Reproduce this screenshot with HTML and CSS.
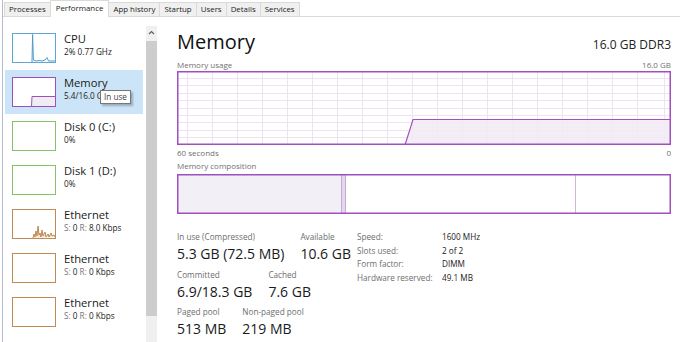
FILE: index.html
```html
<!DOCTYPE html>
<html lang="en">
  <head>
    <meta charset="UTF-8" />
    <title>Task Manager - Performance</title>
    <link rel="stylesheet" href="styles.css">
  </head>
  <body>
    <div class="app">
      <nav class="tabs">
        <span class="tab">Processes</span>
        <span class="tab active">Performance</span>
        <span class="tab">App history</span>
        <span class="tab">Startup</span>
        <span class="tab">Users</span>
        <span class="tab">Details</span>
        <span class="tab">Services</span>
      </nav>

      <div class="panes">
        <aside class="sidebar">
          <ul class="list">
            <li class="item">
              <svg class="thumb" width="44" height="30" viewBox="0 0 44 30">
                <rect x="0.5" y="0.5" width="43" height="29" fill="#fff" stroke="#5ea6d3" />
                <polyline points="20,29 20.6,1.5 21.4,27 24,28 27,27.5 30,28 33,27 35,24.5 36.5,28 43,28" fill="none" stroke="#4c9bcc" stroke-width="1" />
              </svg>
              <div class="info">
                <div class="name">CPU</div>
                <div class="sub">2% 0.77 GHz</div>
              </div>
            </li>
            <li class="item selected">
              <svg class="thumb" width="44" height="30" viewBox="0 0 44 30">
                <rect x="0.5" y="0.5" width="43" height="29" fill="#fff" stroke="#9d4fbf" />
                <polygon points="19.5,29.5 20,19.5 43.5,19.5 43.5,29.5" fill="#f0edf2" stroke="#9d4fbf" stroke-width="1" />
              </svg>
              <div class="info">
                <div class="name">Memory</div>
                <div class="sub clip">5.4/16.0 GB (34%)</div>
              </div>
              <div class="tooltip">In use</div>
            </li>
            <li class="item">
              <svg class="thumb" width="44" height="30" viewBox="0 0 44 30">
                <rect x="0.5" y="0.5" width="43" height="29" fill="#fff" stroke="#86c267" />
              </svg>
              <div class="info">
                <div class="name">Disk 0 (C:)</div>
                <div class="sub">0%</div>
              </div>
            </li>
            <li class="item">
              <svg class="thumb" width="44" height="30" viewBox="0 0 44 30">
                <rect x="0.5" y="0.5" width="43" height="29" fill="#fff" stroke="#86c267" />
              </svg>
              <div class="info">
                <div class="name">Disk 1 (D:)</div>
                <div class="sub">0%</div>
              </div>
            </li>
            <li class="item">
              <svg class="thumb" width="44" height="30" viewBox="0 0 44 30">
                <rect x="0.5" y="0.5" width="43" height="29" fill="#fff" stroke="#c08a52" />
                <polyline points="21,29 22,25 23,28 24,22 25,27 26,17 27,26 28,24 29,28 30,21 31,27 33,23 34,28 36,25 37,28 39,24 40,27 42,26 43,28" fill="#f3e7da" stroke="#c08a52" stroke-width="1" />
              </svg>
              <div class="info">
                <div class="name">Ethernet</div>
                <div class="sub"><span class="dim">S:</span> 0 <span class="dim">R:</span> 8.0 Kbps</div>
              </div>
            </li>
            <li class="item">
              <svg class="thumb" width="44" height="30" viewBox="0 0 44 30">
                <rect x="0.5" y="0.5" width="43" height="29" fill="#fff" stroke="#c08a52" />
              </svg>
              <div class="info">
                <div class="name">Ethernet</div>
                <div class="sub"><span class="dim">S:</span> 0 <span class="dim">R:</span> 0 Kbps</div>
              </div>
            </li>
            <li class="item">
              <svg class="thumb" width="44" height="30" viewBox="0 0 44 30">
                <rect x="0.5" y="0.5" width="43" height="29" fill="#fff" stroke="#c08a52" />
              </svg>
              <div class="info">
                <div class="name">Ethernet</div>
                <div class="sub"><span class="dim">S:</span> 0 <span class="dim">R:</span> 0 Kbps</div>
              </div>
            </li>
          </ul>
          <div class="scrollbar">
            <svg class="arrow" width="11" height="10" viewBox="0 0 11 10">
              <polyline points="3,6 5.5,3.5 8,6" fill="none" stroke="#606060" stroke-width="1.2" />
            </svg>
            <div class="scroll-thumb"></div>
          </div>
        </aside>

        <main class="detail">
          <header class="head">
            <h1 class="title">Memory</h1>
            <span class="spec">16.0 GB DDR3</span>
          </header>

          <div class="caption">
            <span>Memory usage</span>
            <span>16.0 GB</span>
          </div>
          <svg class="graph" width="494" height="74" viewBox="0 0 494 74">
            <g stroke="#efe3f3" stroke-width="1">
              <line x1="10.5" y1="0" x2="10.5" y2="74" />
              <line x1="35.5" y1="0" x2="35.5" y2="74" />
              <line x1="60.5" y1="0" x2="60.5" y2="74" />
              <line x1="85.5" y1="0" x2="85.5" y2="74" />
              <line x1="110.5" y1="0" x2="110.5" y2="74" />
              <line x1="135.5" y1="0" x2="135.5" y2="74" />
              <line x1="160.5" y1="0" x2="160.5" y2="74" />
              <line x1="185.5" y1="0" x2="185.5" y2="74" />
              <line x1="210.5" y1="0" x2="210.5" y2="74" />
              <line x1="235.5" y1="0" x2="235.5" y2="74" />
              <line x1="260.5" y1="0" x2="260.5" y2="74" />
              <line x1="285.5" y1="0" x2="285.5" y2="74" />
              <line x1="310.5" y1="0" x2="310.5" y2="74" />
              <line x1="335.5" y1="0" x2="335.5" y2="74" />
              <line x1="360.5" y1="0" x2="360.5" y2="74" />
              <line x1="385.5" y1="0" x2="385.5" y2="74" />
              <line x1="410.5" y1="0" x2="410.5" y2="74" />
              <line x1="435.5" y1="0" x2="435.5" y2="74" />
              <line x1="460.5" y1="0" x2="460.5" y2="74" />
              <line x1="487.5" y1="0" x2="487.5" y2="74" />
              <line x1="0" y1="7.5" x2="494" y2="7.5" />
              <line x1="0" y1="14.5" x2="494" y2="14.5" />
              <line x1="0" y1="22.5" x2="494" y2="22.5" />
              <line x1="0" y1="29.5" x2="494" y2="29.5" />
              <line x1="0" y1="37.5" x2="494" y2="37.5" />
              <line x1="0" y1="44.5" x2="494" y2="44.5" />
              <line x1="0" y1="51.5" x2="494" y2="51.5" />
              <line x1="0" y1="59.5" x2="494" y2="59.5" />
              <line x1="0" y1="66.5" x2="494" y2="66.5" />
            </g>
            <polygon points="228,74 236,48.5 494,48.5 494,74" fill="#f1ebf4" fill-opacity="0.85" stroke="#a054c0" stroke-width="1.2" />
            <rect x="0.75" y="0.75" width="492.5" height="72.5" fill="none" stroke="#a04fbf" stroke-width="1.5" />
          </svg>
          <div class="caption seconds">
            <span>60 seconds</span>
            <span>0</span>
          </div>

          <div class="caption composition-label">Memory composition</div>
          <svg class="composition" width="494" height="40" viewBox="0 0 494 40">
            <rect x="0" y="0" width="164.5" height="40" fill="#f3eff6" />
            <rect x="164.5" y="0" width="4" height="40" fill="#e6d8ec" />
            <line x1="164.5" y1="0" x2="164.5" y2="40" stroke="#c9a7d8" stroke-width="1" />
            <line x1="168.5" y1="0" x2="168.5" y2="40" stroke="#c9a7d8" stroke-width="1" />
            <line x1="398.5" y1="0" x2="398.5" y2="40" stroke="#d2b4de" stroke-width="1" />
            <rect x="0.75" y="0.75" width="492.5" height="38.5" fill="none" stroke="#a04fbf" stroke-width="1.5" />
          </svg>

          <section class="stats">
            <div class="figures">
              <div class="row">
                <div class="cell"><div class="label">In use (Compressed)</div><div class="value">5.3 GB (72.5 MB)</div></div>
                <div class="cell"><div class="label">Available</div><div class="value">10.6 GB</div></div>
              </div>
              <div class="row">
                <div class="cell"><div class="label">Committed</div><div class="value">6.9/18.3 GB</div></div>
                <div class="cell"><div class="label">Cached</div><div class="value">7.6 GB</div></div>
              </div>
              <div class="row">
                <div class="cell"><div class="label">Paged pool</div><div class="value">513 MB</div></div>
                <div class="cell"><div class="label">Non-paged pool</div><div class="value">219 MB</div></div>
              </div>
            </div>
            <dl class="specs">
              <dt>Speed:</dt><dd>1600 MHz</dd>
              <dt>Slots used:</dt><dd>2 of 2</dd>
              <dt>Form factor:</dt><dd>DIMM</dd>
              <dt>Hardware reserved:</dt><dd>49.1 MB</dd>
            </dl>
          </section>
        </main>
      </div>
    </div>
  </body>
</html>
```

FILE: styles.css
```css
* {
  box-sizing: border-box;
}
body {
  margin: 0;
  background: #fff;
  font-family: "Open Sans", "Noto Sans", sans-serif;
  color: #1a1a1a;
}
.app {
  width: 678px;
  height: 342px;
  overflow: hidden;
  border-left: 1px solid #b4bccb;
  margin-left: 2px;
  display: flex;
  flex-direction: column;
}

/* tabs */
.tabs {
  display: flex;
  align-items: flex-end;
  height: 17px;
  padding-left: 1px;
  border-bottom: 1px solid #d9d9d9;
}
.tab {
  height: 14px;
  padding: 0 4px;
  font-size: 7.9px;
  line-height: 13px;
  color: #222;
  background: #f0f0f0;
  border: 1px solid #dadada;
  border-bottom: none;
  margin-right: -1px;
}
.tab.active {
  height: 17px;
  line-height: 15px;
  padding: 0 5px;
  background: #fff;
  margin-bottom: -1px;
  position: relative;
  z-index: 1;
}

/* sidebar */
.panes {
  flex: 1;
  display: flex;
  min-height: 0;
}
.sidebar {
  width: 155px;
  display: flex;
  padding-top: 9px;
}
.list {
  list-style: none;
  margin: 0;
  padding: 0 0 0 2px;
  width: 140px;
}
.item {
  position: relative;
  display: flex;
  align-items: flex-start;
  height: 44px;
  padding: 7px 0 0 7px;
}
.item.selected {
  background: #cce4f7;
}
.thumb {
  flex: none;
  display: block;
}
.info {
  margin-left: 8px;
  white-space: nowrap;
}
.name {
  font-size: 11.2px;
  line-height: 14px;
  margin-top: -1px;
  color: #1a1a1a;
}
.sub {
  font-size: 8.2px;
  line-height: 12px;
  color: #1a1a1a;
}
.sub.clip {
  width: 68px;
  overflow: hidden;
}
.dim {
  color: #777;
}
.tooltip {
  position: absolute;
  left: 95px;
  top: 20px;
  padding: 0 3px;
  height: 14px;
  font-size: 8.2px;
  line-height: 12px;
  color: #444;
  background: #fff;
  border: 1px solid #777;
  box-shadow: 2px 2px 2px rgba(0, 0, 0, 0.25);
}
.scrollbar {
  margin-left: 3px;
  width: 11px;
  background: #f0f0f0;
  display: flex;
  flex-direction: column;
  align-items: center;
}
.arrow {
  margin-top: 2px;
  display: block;
}
.scroll-thumb {
  margin-top: 3px;
  width: 100%;
  height: 275px;
  background: #cdcdcd;
}

/* detail pane */
.detail {
  flex: 1;
  padding: 0 9px 0 19px;
}
.head {
  display: flex;
  justify-content: space-between;
  align-items: baseline;
  height: 42px;
  padding-top: 12px;
}
.title {
  margin: 0;
  font-size: 20px;
  font-weight: 400;
  line-height: 26px;
  color: #111;
}
.spec {
  font-size: 12px;
  color: #222;
}
.caption {
  display: flex;
  justify-content: space-between;
  width: 494px;
  font-size: 8px;
  line-height: 12px;
  color: #707070;
}
.caption.seconds {
  margin-top: 2px;
}
.graph,
.composition {
  display: block;
}
.composition-label {
  margin-top: 1px;
  height: 14px;
}

/* stats */
.stats {
  display: flex;
  margin-top: 17px;
}
.figures {
  width: 180px;
}
.row {
  display: flex;
  gap: 16px;
  margin-bottom: 3.5px;
}
.label {
  font-size: 8.2px;
  line-height: 12px;
  color: #6e6e6e;
}
.value {
  font-size: 14px;
  line-height: 22px;
  color: #1a1a1a;
}
.specs {
  margin: 0;
  display: grid;
  grid-template-columns: 85px auto;
  grid-auto-rows: 13.5px;
  align-items: center;
  font-size: 8.2px;
  margin-top: -1px;
}
.specs dt {
  color: #6e6e6e;
}
.specs dd {
  margin: 0;
  color: #1a1a1a;
}
```
